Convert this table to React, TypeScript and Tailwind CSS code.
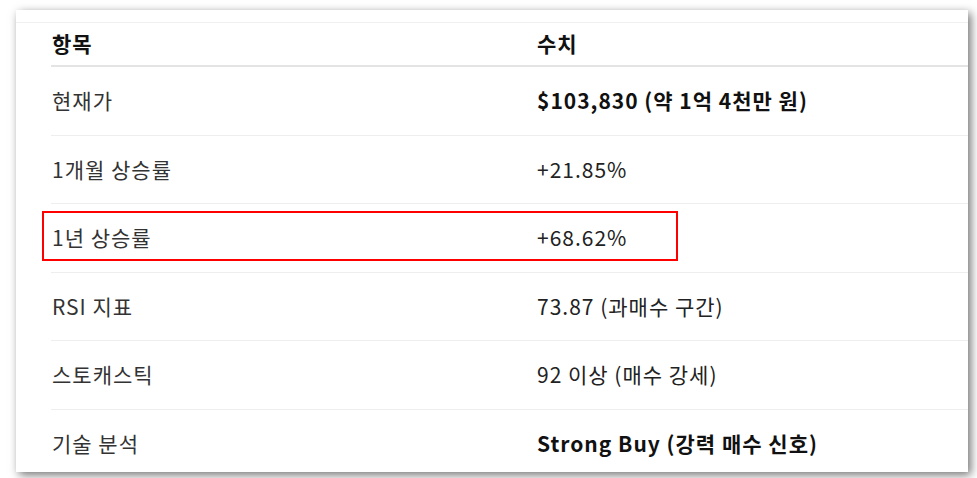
import React from "react";

type Row = {
    label: string;
    value: string;
    bold?: boolean;
    highlight?: boolean;
};

const rows: Row[] = [
    { label: "현재가", value: "$103,830 (약 1억 4천만 원)", bold: true },
    { label: "1개월 상승률", value: "+21.85%" },
    { label: "1년 상승률", value: "+68.62%", highlight: true },
    { label: "RSI 지표", value: "73.87 (과매수 구간)" },
    { label: "스토캐스틱", value: "92 이상 (매수 강세)" },
    { label: "기술 분석", value: "Strong Buy (강력 매수 신호)", bold: true },
];

function App() {
    return (
        <div className="h-[478px] w-[977px] overflow-hidden bg-white pl-[16px] pt-[10px] font-['Noto_Sans_CJK_KR',sans-serif] tracking-[1px]">
            <div className="h-[462px] w-[952px] overflow-hidden bg-white shadow-[3px_3px_9px_rgba(0,0,0,0.55)]">
                <div className="mt-[12px] border-t border-[#f0f0f0] pl-[35px]">
                    <div className="grid h-[44px] grid-cols-[486px_1fr] items-center border-b-2 border-[#e4e4e4] text-[21px] font-bold text-[#111]">
                        <div className="pl-[1px]">항목</div>
                        <div>수치</div>
                    </div>
                    {rows.map((r) => (
                        <div
                            key={r.label}
                            className="relative grid h-[68.5px] grid-cols-[486px_1fr] items-center border-b border-[#eeeeee] text-[21px] text-[#333]"
                        >
                            {r.highlight && (
                                <div className="absolute left-[-9px] top-[7px] h-[50px] w-[636px] border-2 border-[#ff0000]" />
                            )}
                            <div className="pl-[1px]">{r.label}</div>
                            <div className={r.bold ? "font-bold text-[#111]" : "text-[#222]"}>{r.value}</div>
                        </div>
                    ))}
                </div>
            </div>
        </div>
    );
}

export default App;
